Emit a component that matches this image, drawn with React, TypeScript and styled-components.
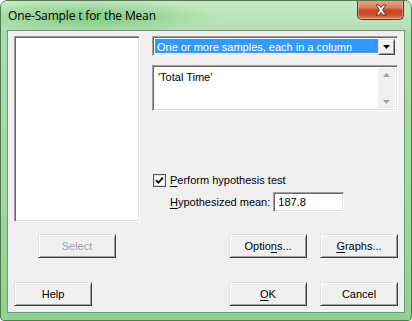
import React from 'react';
import styled, { createGlobalStyle } from 'styled-components';

const GlobalStyle = createGlobalStyle`
  html, body {
    margin: 0;
    padding: 0;
    background: #ffffff;
  }
  * {
    box-sizing: border-box;
  }
`;

const uiFont = `"Liberation Sans", Arial, sans-serif`;

// Window frame
const Window = styled.div`
  width: 412px;
  height: 321px;
  display: flex;
  flex-direction: column;
  border: 1px solid #4c7f4c;
  border-radius: 7px 7px 4px 4px;
  background: linear-gradient(180deg, #b8e2b8 0%, #aadcaa 10%, #a0d8a0 60%, #92d092 100%);
  overflow: hidden;
`;

const TitleBar = styled.div`
  height: 29px;
  display: flex;
  align-items: flex-start;
  justify-content: space-between;
  padding: 0 7px 0 7px;
  background: radial-gradient(ellipse 130px 18px at 90px 16px, rgba(120, 200, 120, 0.9), rgba(120, 200, 120, 0) 100%),
    linear-gradient(180deg, #c6e8c6 0%, #b5e0b5 100%);
`;

const Title = styled.span`
  font-family: "Open Sans", "Noto Sans", sans-serif;
  font-size: 12px;
  line-height: 16px;
  margin-top: 7px;
  color: #000000;
  letter-spacing: -0.15px;
`;

const CloseButton = styled.div`
  width: 47px;
  height: 20px;
  margin-top: -1px;
  border: 1px solid #6f2a1a;
  border-top: none;
  border-radius: 0 0 5px 5px;
  background: linear-gradient(180deg, #e6a690 0%, #d9805f 40%, #c34625 55%, #c9502f 80%, #e08b62 100%);
  box-shadow: inset 0 0 0 1px rgba(255, 210, 190, 0.45);
  display: flex;
  align-items: center;
  justify-content: center;
`;

const Client = styled.div`
  flex: 1;
  margin: 0 6px 7px 6px;
  border: 1px solid #6f9a6f;
  background: #f0f0f0;
  padding: 5px 6px 0 6px;
  display: flex;
  flex-direction: column;
  font-family: ${uiFont};
  font-size: 11px;
  color: #000000;
`;

const TopSection = styled.div`
  display: flex;
  gap: 12px;
  height: 186px;
`;

// Classic 2px sunken edge
const Sunken = styled.div`
  border-style: solid;
  border-width: 1px;
  border-color: #a0a0a0 #ffffff #ffffff #a0a0a0;
  box-shadow: inset 1px 1px 0 #696969, inset -1px -1px 0 #e3e3e3;
  background: #ffffff;
`;

const ListBox = styled(Sunken)`
  width: 126px;
  height: 186px;
`;

const RightColumn = styled.div`
  width: 246px;
  display: flex;
  flex-direction: column;
`;

const Dropdown = styled(Sunken)`
  height: 20px;
  padding: 2px;
  display: flex;
`;

const DropdownValue = styled.div`
  flex: 1;
  background: #3399ff;
  color: #ffffff;
  font-size: 11px;
  line-height: 16px;
  padding-left: 2px;
  white-space: nowrap;
`;

const Raised = styled.div`
  border-style: solid;
  border-width: 1px;
  border-color: #e3e3e3 #404040 #404040 #e3e3e3;
  box-shadow: inset 1px 1px 0 #ffffff, inset -1px -1px 0 #a0a0a0;
  background: #f0f0f0;
`;

const DropArrow = styled(Raised)`
  width: 17px;
  height: 16px;
  display: flex;
  align-items: center;
  justify-content: center;
`;

const TextArea = styled(Sunken)`
  margin-top: 9px;
  height: 46px;
  padding: 2px;
  display: flex;
`;

const TextValue = styled.div`
  flex: 1;
  padding: 2px 0 0 3px;
  font-size: 11px;
  line-height: 14px;
`;

const ScrollBar = styled.div`
  width: 17px;
  background: #f0f0f0;
  display: flex;
  flex-direction: column;
  justify-content: space-between;
  align-items: center;
  padding: 5px 0 4px;
`;

const CheckRow = styled.div`
  margin-top: 62px;
  display: flex;
  align-items: center;
  gap: 4px;
  height: 14px;
`;

const CheckBox = styled.div`
  width: 13px;
  height: 13px;
  margin-left: 1px;
  border: 1px solid #555555;
  box-shadow: inset 0 0 0 1px #e0e0e0;
  background: #ffffff;
  display: flex;
  align-items: center;
  justify-content: center;
`;

const Label = styled.span`
  font-size: 11px;
  line-height: 14px;
  white-space: nowrap;
`;

const Key = styled.span`
  text-decoration: underline;
  text-underline-offset: 2px;
`;

const MeanRow = styled.div`
  margin-top: 5px;
  display: flex;
  align-items: center;
  padding-left: 18px;
  gap: 3px;
`;

const MeanInput = styled(Sunken)`
  width: 71px;
  height: 20px;
  padding: 0 0 0 4px;
  font-size: 11px;
  line-height: 18px;
`;

const ButtonRow = styled.div<{ $top: number }>`
  margin-top: ${({ $top }) => $top}px;
  display: flex;
  justify-content: space-between;
  align-items: center;
`;

const RightButtons = styled.div`
  display: flex;
  gap: 13px;
`;

const Button = styled(Raised)<{ $disabled?: boolean; $offset?: number }>`
  width: 78px;
  height: 24px;
  margin-left: ${({ $offset }) => $offset ?? 0}px;
  display: flex;
  align-items: center;
  justify-content: center;
  font-size: 11px;
  color: ${({ $disabled }) => ($disabled ? '#a0a0a0' : '#000000')};
`;

export default function App() {
  return (
    <>
      <GlobalStyle />
      <Window>
        <TitleBar>
          <Title>One-Sample t for the Mean</Title>
          <CloseButton>
            <svg width="14" height="12" viewBox="0 0 14 12">
              <path
                d="M2 1 L5 1 L7 3.5 L9 1 L12 1 L8.6 6 L12 11 L9 11 L7 8.5 L5 11 L2 11 L5.4 6 Z"
                fill="#ffffff"
                stroke="#5a2218"
                strokeWidth="0.9"
                strokeLinejoin="round"
              />
            </svg>
          </CloseButton>
        </TitleBar>
        <Client>
          <TopSection>
            <ListBox />
            <RightColumn>
              <Dropdown>
                <DropdownValue>One or more samples, each in a column</DropdownValue>
                <DropArrow>
                  <svg width="7" height="4" viewBox="0 0 7 4">
                    <path d="M0 0 H7 L3.5 4 Z" fill="#000000" />
                  </svg>
                </DropArrow>
              </Dropdown>
              <TextArea>
                <TextValue>'Total Time'</TextValue>
                <ScrollBar>
                  <svg width="7" height="4" viewBox="0 0 7 4">
                    <path d="M0 4 H7 L3.5 0 Z" fill="#a3a3a3" />
                  </svg>
                  <svg width="7" height="4" viewBox="0 0 7 4">
                    <path d="M0 0 H7 L3.5 4 Z" fill="#a3a3a3" />
                  </svg>
                </ScrollBar>
              </TextArea>
              <CheckRow>
                <CheckBox>
                  <svg width="9" height="9" viewBox="0 0 9 9">
                    <path d="M1 4.2 L3.4 6.6 L8 1.6" fill="none" stroke="#000000" strokeWidth="1.8" />
                  </svg>
                </CheckBox>
                <Label>
                  <Key>P</Key>erform hypothesis test
                </Label>
              </CheckRow>
              <MeanRow>
                <Label>
                  <Key>H</Key>ypothesized mean:
                </Label>
                <MeanInput>187.8</MeanInput>
              </MeanRow>
            </RightColumn>
          </TopSection>
          <ButtonRow $top={12}>
            <Button $disabled $offset={24}>Select</Button>
            <RightButtons>
              <Button>
                Optio<Key>n</Key>s...
              </Button>
              <Button>
                <Key>G</Key>raphs...
              </Button>
            </RightButtons>
          </ButtonRow>
          <ButtonRow $top={24}>
            <Button>Help</Button>
            <RightButtons>
              <Button>
                <Key>O</Key>K
              </Button>
              <Button>Cancel</Button>
            </RightButtons>
          </ButtonRow>
        </Client>
      </Window>
    </>
  );
}
